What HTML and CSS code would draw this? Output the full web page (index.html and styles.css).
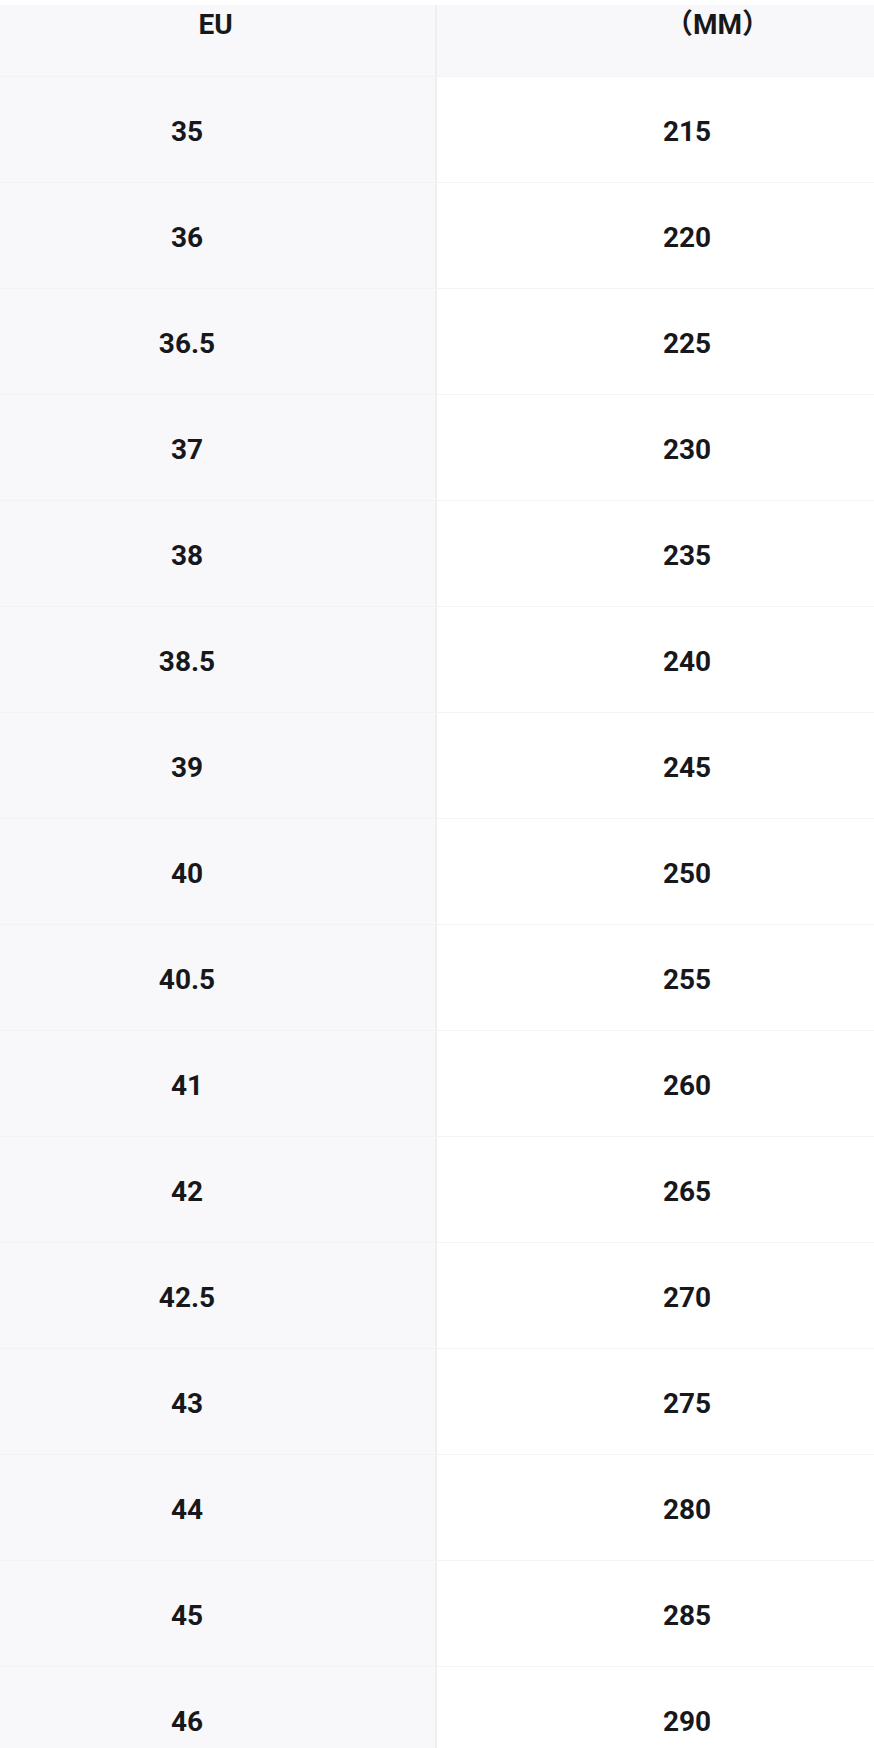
FILE: index.html
```html
<!DOCTYPE html>
<html lang="zh">
<head>
<meta charset="utf-8">
<title>Size chart</title>
<link rel="stylesheet" href="styles.css">
</head>
<body>
<div class="table">
  <div class="row head">
    <div class="cell c1">EU</div>
    <div class="cell c2">（MM）</div>
  </div>
  <div class="row"><div class="cell c1">35</div><div class="cell c2">215</div></div>
  <div class="row"><div class="cell c1">36</div><div class="cell c2">220</div></div>
  <div class="row"><div class="cell c1">36.5</div><div class="cell c2">225</div></div>
  <div class="row"><div class="cell c1">37</div><div class="cell c2">230</div></div>
  <div class="row"><div class="cell c1">38</div><div class="cell c2">235</div></div>
  <div class="row"><div class="cell c1">38.5</div><div class="cell c2">240</div></div>
  <div class="row"><div class="cell c1">39</div><div class="cell c2">245</div></div>
  <div class="row"><div class="cell c1">40</div><div class="cell c2">250</div></div>
  <div class="row"><div class="cell c1">40.5</div><div class="cell c2">255</div></div>
  <div class="row"><div class="cell c1">41</div><div class="cell c2">260</div></div>
  <div class="row"><div class="cell c1">42</div><div class="cell c2">265</div></div>
  <div class="row"><div class="cell c1">42.5</div><div class="cell c2">270</div></div>
  <div class="row"><div class="cell c1">43</div><div class="cell c2">275</div></div>
  <div class="row"><div class="cell c1">44</div><div class="cell c2">280</div></div>
  <div class="row"><div class="cell c1">45</div><div class="cell c2">285</div></div>
  <div class="row"><div class="cell c1">46</div><div class="cell c2">290</div></div>
</div>
</body>
</html>
```

FILE: styles.css
```css
html, body {
  margin: 0;
  padding: 0;
  background: #ffffff;
}
body {
  padding-top: 5px;
  height: 1748px;
  box-sizing: border-box;
  overflow: hidden;
  font-family: Roboto, "Noto Sans CJK SC", sans-serif;
  font-weight: 700;
  font-size: 28px;
  color: #18181b;
}
.table {
  display: flex;
  flex-direction: column;
  width: 874px;
}
.row {
  display: grid;
  grid-template-columns: 437px 437px;
  height: 106px;
}
.row.head {
  height: 72px;
}
.cell {
  display: flex;
  align-items: center;
  justify-content: center;
  box-sizing: border-box;
  border-bottom: 1.5px solid #f3f3f5;
  line-height: 40px;
  padding-top: 4px;
}
.c1 {
  background: #f8f8fa;
  border-right: 2px solid #efeff2;
  padding-right: 61px;
}
.c2 {
  background: #ffffff;
  padding-left: 63px;
}
.head .cell {
  align-items: flex-start;
  background: #f8f8fa;
  padding-top: 0;
}
.head .c1 {
  padding-right: 4px;
}
.head .c2 {
  padding-left: 124px;
}
```
